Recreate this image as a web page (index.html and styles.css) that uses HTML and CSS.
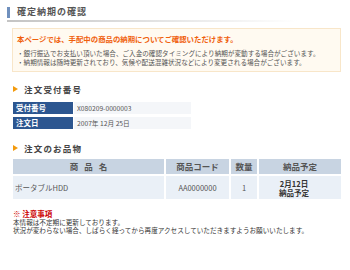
FILE: index.html
```html
<!DOCTYPE html>
<html lang="ja">
<head>
<meta charset="utf-8">
<link rel="stylesheet" href="styles.css">
</head>
<body>
<div class="title"><span class="bar"></span><h1>確定納期の確認</h1></div>
<div class="rule"></div>
<div class="notice">
  <p class="lead">本ページでは、手配中の商品の納期についてご確認いただけます。</p>
  <ul class="points">
    <li>・銀行振込でお支払い頂いた場合、ご入金の確認タイミングにより納期が変動する場合がございます。</li>
    <li>・納期情報は随時更新されており、気候や配送混雑状況などにより変更される場合がございます。</li>
  </ul>
</div>
<h2 class="sec"><span class="tri"></span>注文受付番号</h2>
<dl class="info">
  <dt>受付番号</dt><dd>X080209-0000003</dd>
  <dt>注文日</dt><dd>2007年 12月 25日</dd>
</dl>
<h2 class="sec sec2"><span class="tri"></span>注文のお品物</h2>
<div class="items">
  <div class="th th-name">商品名</div>
  <div class="th">商品コード</div>
  <div class="th">数量</div>
  <div class="th">納品予定</div>
  <div class="td td-name">ポータブルHDD</div>
  <div class="td td-c">AA0000000</div>
  <div class="td td-c">1</div>
  <div class="td td-date">2月12日<br>納品予定</div>
</div>
<div class="note">
  <p class="note-head">※ 注意事項</p>
  <p>本情報は不定期に更新しております。</p>
  <p>状況が変わらない場合、しばらく経ってから再度アクセスしていただきますようお願いいたします。</p>
</div>
</body>
</html>
```
FILE: styles.css
```css
html, body {
  margin: 0;
  padding: 0;
  background: #fff;
  font-family: "Noto Sans CJK JP", "Noto Sans", sans-serif;
  color: #444;
}
p, ul, li, h1, h2, dl, dt, dd { margin: 0; padding: 0; }
ul { list-style: none; }

.title {
  display: flex;
  align-items: center;
  height: 12px;
  margin: 6px 0 0 7px;
}
.title .bar {
  width: 3px;
  height: 11px;
  background: #7090bd;
}
.title h1 {
  margin-left: 7px;
  font-size: 9px;
  line-height: 12px;
  letter-spacing: 1px;
  font-weight: bold;
  color: #555;
}
.rule {
  margin: 2px 0 0 7px;
  width: 290px;
  height: 2px;
  background: linear-gradient(to right, #c4c4c4, #eee 70%, #fff);
}

.notice {
  margin: 6px 0 0 12px;
  width: 323px;
  padding: 5px 0 5px 4px;
  border: 1px solid #f8e6c9;
  background: #fffaf1;
}
.notice .lead {
  font-size: 7.4px;
  line-height: 9px;
  font-weight: bold;
  color: #f0600c;
}
.notice .points {
  margin-top: 6px;
  font-size: 6.6px;
  line-height: 8.5px;
  color: #555;
}

.sec {
  display: flex;
  align-items: center;
  height: 12px;
  margin: 11px 0 0 13px;
  font-size: 8.5px;
  line-height: 12px;
  letter-spacing: 1.2px;
  font-weight: bold;
  color: #444;
}
.sec .tri {
  width: 0;
  height: 0;
  border-left: 5px solid #f39a0c;
  border-top: 3.5px solid transparent;
  border-bottom: 3.5px solid transparent;
  margin-right: 6px;
}
.sec2 { margin-top: 13px; }

.info {
  display: grid;
  grid-template-columns: 60px 117px;
  grid-auto-rows: 12px;
  column-gap: 1px;
  row-gap: 3px;
  margin: 7px 0 0 13px;
}
.info dt {
  background: #2c5690;
  color: #fff;
  font-weight: bold;
  font-size: 7.5px;
  line-height: 12px;
  padding-left: 3px;
}
.info dd {
  background: #f4f6f9;
  color: #555;
  font-size: 6.7px;
  line-height: 12px;
  padding-left: 3px;
}

.items {
  display: grid;
  grid-template-columns: 151px 63px 26px 82px;
  grid-template-rows: 15px 23px;
  gap: 2px;
  margin: 5px 0 0 13px;
}
.th {
  background: #c8d4e2;
  color: #555;
  font-weight: bold;
  font-size: 8.5px;
  line-height: 15px;
  text-align: center;
}
.th-name { letter-spacing: 6px; text-indent: 6px; }
.td {
  background: #eaf0f7;
  color: #555;
  font-size: 7.5px;
  display: flex;
  align-items: center;
}
.td-name { padding-left: 2px; }
.td-c { justify-content: center; }
.td-date {
  justify-content: center;
  text-align: center;
  font-weight: bold;
  color: #333;
  font-size: 7.5px;
  line-height: 9px;
  padding-right: 12px;
}

.note {
  margin: 11px 0 0 13px;
  font-size: 6.6px;
  line-height: 8px;
  color: #333;
}
.note .note-head {
  color: #c00;
  font-weight: bold;
  font-size: 7.5px;
}
```
